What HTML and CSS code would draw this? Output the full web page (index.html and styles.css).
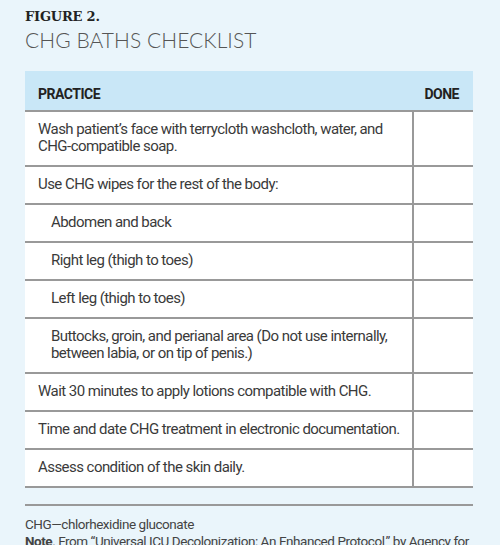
FILE: index.html
```html
<!DOCTYPE html>
<html>
<head>
<meta charset="utf-8">
<link rel="stylesheet" href="styles.css">
</head>
<body>
<div class="page">
  <div class="fig-label">FIGURE 2.</div>
  <div class="fig-title">CHG BATHS CHECKLIST</div>
  <div class="table">
    <div class="row head">
      <div class="h1">PRACTICE</div>
      <div class="h2">DONE</div>
    </div>
    <div class="row">
      <div class="c1">Wash patient’s face with terrycloth washcloth, water, and CHG-compatible soap.</div>
      <div class="c2"></div>
    </div>
    <div class="row">
      <div class="c1">Use CHG wipes for the rest of the body:</div>
      <div class="c2"></div>
    </div>
    <div class="row">
      <div class="c1 ind">Abdomen and back</div>
      <div class="c2"></div>
    </div>
    <div class="row">
      <div class="c1 ind">Right leg (thigh to toes)</div>
      <div class="c2"></div>
    </div>
    <div class="row">
      <div class="c1 ind">Left leg (thigh to toes)</div>
      <div class="c2"></div>
    </div>
    <div class="row">
      <div class="c1 ind">Buttocks, groin, and perianal area (Do not use internally, between labia, or on tip of penis.)</div>
      <div class="c2"></div>
    </div>
    <div class="row">
      <div class="c1">Wait 30 minutes to apply lotions compatible with CHG.</div>
      <div class="c2"></div>
    </div>
    <div class="row">
      <div class="c1">Time and date CHG treatment in electronic documentation.</div>
      <div class="c2"></div>
    </div>
    <div class="row">
      <div class="c1">Assess condition of the skin daily.</div>
      <div class="c2"></div>
    </div>
  </div>
  <div class="rule"></div>
  <div class="foot first">CHG—chlorhexidine gluconate</div>
  <div class="foot note"><b>Note</b>. From “Universal ICU Decolonization: An Enhanced Protocol,” by Agency for</div>
</div>
</body>
</html>
```
FILE: styles.css
```css
html, body {
  margin: 0;
  padding: 0;
  background: #eaf5fb;
}
.page {
  padding: 9px 27px 0 25px;
  width: 448px;
  font-family: Roboto, "Liberation Sans", sans-serif;
  color: #333;
}
.fig-label {
  font-family: "DejaVu Serif", serif;
  font-weight: 900;
  font-size: 13px;
  line-height: 16px;
  letter-spacing: -0.2px;
  color: #222;
}
.fig-title {
  font-family: Lato, sans-serif;
  font-weight: 300;
  font-size: 21px;
  line-height: 26px;
  margin-top: 2px;
  color: #555;
  letter-spacing: 0.05px;
  margin-bottom: 18px;
}
.table {
  background: #fff;
  border-bottom: 2px solid #999;
}
.row {
  display: grid;
  grid-template-columns: 387px 1fr;
  border-top: 2px solid #999;
}
.row.head {
  background: #c9e7f7;
  border-top: none;
  height: 39px;
  align-items: center;
}
.h1, .h2 {
  font-weight: bold;
  font-size: 14px;
  line-height: 16px;
  letter-spacing: -0.5px;
  color: #222;
  padding-top: 7px;
}
.h1 {
  padding-left: 13px;
}
.h2 {
  text-align: right;
  padding-right: 14px;
}
.c1 {
  padding: 9px 10px 10px 13px;
  font-size: 15px;
  line-height: 17px;
  letter-spacing: -0.55px;
  color: #3a3a3a;
}
.c1.ind {
  padding-left: 26px;
}
.c2 {
  border-left: 2px solid #999;
}
.rule {
  margin-top: 16px;
  border-top: 2px solid #999;
}
.foot {
  font-size: 13.5px;
  line-height: 17px;
  letter-spacing: -0.45px;
  color: #444;
}
.foot.first {
  margin-top: 10px;
}
.foot.note {
  white-space: nowrap;
}
```
